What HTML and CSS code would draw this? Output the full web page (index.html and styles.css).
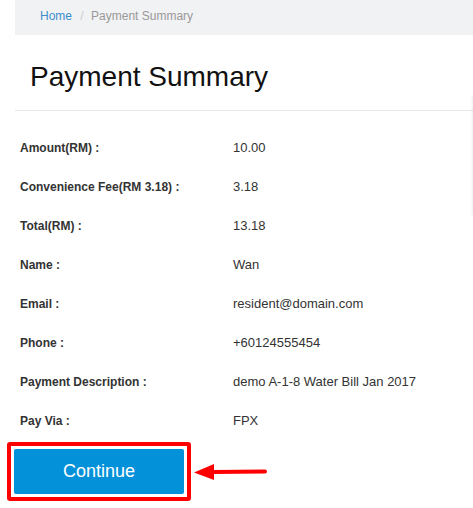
FILE: index.html
```html
<!DOCTYPE HTML>
<html>

<head>
  <meta charset="utf-8">
  <link rel="stylesheet" href="styles.css">
</head>

<body>
<div class="page">
  <div class="breadcrumb">
    <a href="#" class="crumb-link">Home</a>
    <span class="crumb-sep">/</span>
    <span class="crumb-current">Payment Summary</span>
  </div>

  <div class="page-head">
    <h1 class="page-title">Payment Summary</h1>
  </div>

  <div class="summary">
    <div class="summary-row"><div class="summary-label">Amount(RM) :</div><div class="summary-value">10.00</div></div>
    <div class="summary-row"><div class="summary-label">Convenience Fee(RM 3.18) :</div><div class="summary-value">3.18</div></div>
    <div class="summary-row"><div class="summary-label">Total(RM) :</div><div class="summary-value">13.18</div></div>
    <div class="summary-row"><div class="summary-label">Name :</div><div class="summary-value">Wan</div></div>
    <div class="summary-row"><div class="summary-label">Email :</div><div class="summary-value">resident@domain.com</div></div>
    <div class="summary-row"><div class="summary-label">Phone :</div><div class="summary-value">+60124555454</div></div>
    <div class="summary-row"><div class="summary-label">Payment Description :</div><div class="summary-value">demo A-1-8 Water Bill Jan 2017</div></div>
    <div class="summary-row"><div class="summary-label">Pay Via :</div><div class="summary-value">FPX</div></div>
  </div>

  <div class="actions">
    <div class="highlight">
      <button class="btn-continue">Continue</button>
    </div>
    <svg class="arrow" width="74" height="20" viewBox="0 0 74 20">
      <path d="M19 10 L71 9.5" stroke="#f00" stroke-width="4" stroke-linecap="round" fill="none"/>
      <path d="M0 10.5 L20 2 L20 18 Z" fill="#f00"/>
    </svg>
  </div>

  <div class="edge-shade"></div>
</div>
</body>

</html>
```

FILE: styles.css
```css
body {
  margin: 0;
  font-family: "Liberation Sans", Arial, sans-serif;
  color: #333;
  background: #fff;
}

.page {
  position: relative;
  padding-left: 15px;
}

.breadcrumb {
  height: 35px;
  line-height: 32px;
  padding-left: 25px;
  background-color: #f1f2f4;
  font-size: 12px;
}

.crumb-link {
  color: #3c8dcb;
  text-decoration: none;
}

.crumb-sep {
  color: #ccc;
  padding: 0 4px 0 5px;
}

.crumb-current {
  color: #999;
}

.page-head {
  padding: 26px 0 17px 15px;
  border-bottom: 1px solid #e7e7e7;
}

.page-title {
  margin: 0;
  font-size: 28px;
  font-weight: normal;
  line-height: 32px;
  color: #111;
}

.summary {
  margin-top: 17px;
  padding-left: 5px;
}

.summary-row {
  display: grid;
  grid-template-columns: 213px 1fr;
  align-items: baseline;
  padding: 10px 0 9px;
  line-height: 20px;
}

.summary-label {
  font-size: 12px;
  font-weight: bold;
  color: #333;
}

.summary-value {
  font-size: 13px;
  color: #333;
}

.actions {
  display: flex;
  align-items: center;
  margin: 2px 0 0 -8px;
}

.highlight {
  border: 4px solid #f00;
  border-radius: 3px;
  padding: 3px;
}

.btn-continue {
  display: block;
  width: 170px;
  height: 45px;
  border: none;
  border-radius: 2px;
  background-color: #0391d9;
  color: #fff;
  font-family: "Liberation Sans", Arial, sans-serif;
  font-size: 18px;
}

.arrow {
  margin: 0 0 0 3px;
}

.edge-shade {
  position: absolute;
  top: 95px;
  right: 0;
  width: 3px;
  height: 120px;
  background: linear-gradient(to right, rgba(0, 0, 0, 0), rgba(0, 0, 0, 0.05));
}
```
